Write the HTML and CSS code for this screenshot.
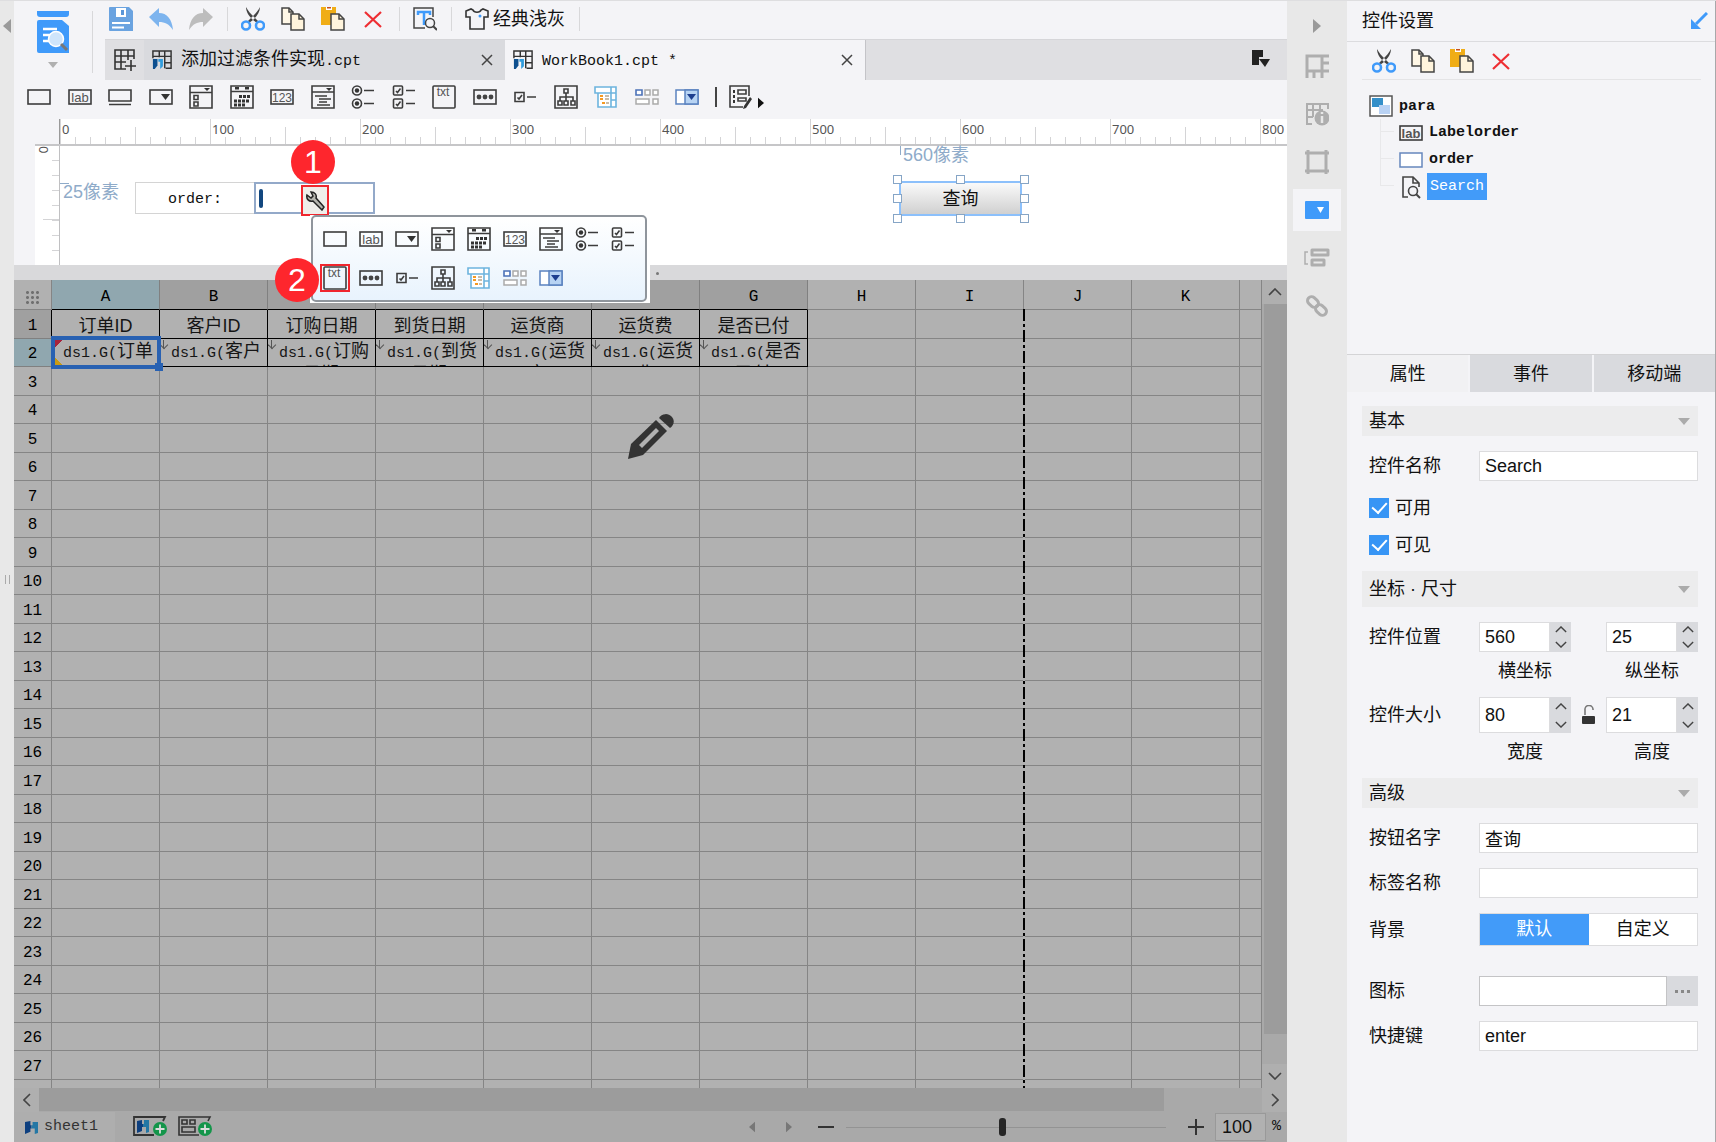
FILE: index.html
```
<!DOCTYPE html>
<html lang="zh-CN">
<head>
  <meta charset="UTF-8" />
  <meta name="viewport" content="width=device-width, initial-scale=1.0" />
  <title>WorkBook1.cpt</title>
  <link rel="stylesheet" href="styles.css">
</head>
<body>
  <svg class="sprite" aria-hidden="true">
    <symbol id="text" viewBox="0 0 24 24"><rect class="ln" x="1" y="5" width="22" height="14" /></symbol>
    <symbol id="lab" viewBox="0 0 24 24"><rect class="ln" x="1" y="5" width="22" height="14" /><text class="tx" x="12" y="16.5" font-size="13">lab</text></symbol>
    <symbol id="button" viewBox="0 0 24 24"><path class="ln" d="M1 5h22v11H1zM1 19.5h22" /></symbol>
    <symbol id="combo" viewBox="0 0 24 24"><rect class="ln" x="1" y="5" width="22" height="14" /><path d="M12 9h9l-4.500 6z" fill="#333" /></symbol>
    <symbol id="combocheck" viewBox="0 0 24 24"><path class="ln" d="M1 1h22v22H1zM1 7.500h22M5 10.500h4v4H5zM5 17h4v4H5z" /><path d="M15 3h6l-3 3z" fill="#333" /></symbol>
    <symbol id="date" viewBox="0 0 24 24"><path class="ln" d="M1 1h22v22H1zM1 6.500h22" /><path d="M5 2v2.500h4V2zM15 2v2.500h4V2z" fill="#333" /><path d="M9 11.500h11M4 16h16M4 20h12" stroke="#333" stroke-width="3" stroke-dasharray="3 1" fill="none" /></symbol>
    <symbol id="num" viewBox="0 0 24 24"><rect class="ln" x="1" y="5" width="22" height="14" /><text class="tx" x="12" y="16.500" font-size="12">123</text></symbol>
    <symbol id="tree" viewBox="0 0 24 24"><path class="ln" d="M1 1h22v22H1zM1 7h22M4 11h12M8 14h12M8 17h8M6 20h13" /><path d="M15 3h6l-3 3z" fill="#333" /></symbol>
    <symbol id="radio" viewBox="0 0 24 24"><g class="ln"><circle cx="6" cy="5.500" r="4.500" /><circle cx="6" cy="18.500" r="4.500" /><path d="M13 5.500h10M13 18.500h10" /></g><circle cx="6" cy="5.500" r="2.200" fill="#333" /><circle cx="6" cy="18.500" r="2.200" fill="#333" /></symbol>
    <symbol id="check" viewBox="0 0 24 24"><g class="ln"><rect x="1.500" y="1" width="9" height="9" rx="1" /><rect x="1.500" y="14" width="9" height="9" rx="1" /><path d="M4 6l1.500 1.500L8.500 3.500M4 19l1.500 1.500L8.500 16.500M14 5.500h9M14 18.500h9" /></g></symbol>
    <symbol id="area" viewBox="0 0 24 24"><rect class="ln" x="1" y="1" width="22" height="22" rx="1" /><text class="tx" x="11" y="11" font-size="12">txt</text></symbol>
    <symbol id="pass" viewBox="0 0 24 24"><rect class="ln" x="1" y="5" width="22" height="14" /><g fill="#444"><circle cx="6" cy="12" r="2.400" /><circle cx="12" cy="12" r="2.400" /><circle cx="18" cy="12" r="2.400" /></g></symbol>
    <symbol id="onecheck" viewBox="0 0 24 24"><path class="ln" d="M2 7.500h9v9H2zM4.500 12.500L6 14l3-4M14 12h9" /></symbol>
    <symbol id="org" viewBox="0 0 24 24"><path class="ln" d="M1 1h22v22H1zM10 4h4v4h-4zM4 16h4v4H4zM10 16h4v4h-4zM17 16h4v4h-4zM12 8v8M6 16v-4h13v4" /></symbol>
    <symbol id="viewtree" viewBox="0 0 24 24"><path d="M1 2h21v6H1zM4 8h13v14H4zM17 2h5v20h-5zM17 15h5" fill="#fff" stroke="#6db4de" stroke-width="1.600" /><path d="M6 11h3M6 14h3M8 18h3" stroke="#f59a23" stroke-width="2" /><path d="M11 11h4M11 14h4M12 18h3" stroke="#b8a78c" stroke-width="1.500" /></symbol>
    <symbol id="group" viewBox="0 0 24 24"><path d="M1 5h6v5H1z" fill="#fff" stroke="#4c72b8" stroke-width="1.600" /><path d="M10 5h5v5h-5zM18 5h5v5h-5zM1 14h13v5H1zM18 14h5v5h-5z" fill="#fff" stroke="#aaa" stroke-width="1.500" /></symbol>
    <symbol id="bluecombo" viewBox="0 0 24 24"><path d="M1 5h22v14H1z" fill="#fff" stroke="#5b83c0" stroke-width="1.500" /><path d="M10 5h13v14H10z" fill="#b7d3f3" stroke="#5b83c0" stroke-width="1.500" /><path d="M12 9h9l-4.500 6z" fill="#1e3f8f" /></symbol>
    <symbol id="predef" viewBox="0 0 24 24"><path class="ln" d="M20 11V1H1v21h13M9 5h8v4H9zM9 13h8v3H9z" /><path d="M4 5h2v3H4zM4 10h2v3H4zM4 15h2v3H4zM21 12l2 2-6 9-3 1 1-3z" fill="#333" /></symbol>

    <symbol id="save" viewBox="0 0 24 24"><path d="M1 0h19l4 4v20H1a1 1 0 0 1-1-1V1a1 1 0 0 1 1-1z" fill="#6aa3e0" /><path d="M7 1h10v9H7z" fill="#fff" /><path d="M12 3h3v5h-3z" fill="#5a96d8" /><path d="M3 16h18M3 20.500h12" stroke="#fff" stroke-width="1.800" /></symbol>
    <symbol id="undo" viewBox="0 0 24 24"><path d="M0 10L10 1v5c8 0 13 6 14 17-4-6-8-8-14-8v5z" fill="#7db4ee" /></symbol>
    <symbol id="redo" viewBox="0 0 24 24"><path d="M24 10L14 1v5C6 6 1 12 0 23c4-6 8-8 14-8v5z" fill="#bdbdbd" /></symbol>
    <symbol id="cut" viewBox="0 0 24 24"><path d="M5 0c0 5 3 9 7 13l4 3 1-2-4-4C10 7 7 4 5 0zM19 0c0 5-3 9-7 13l-4 3-1-2 4-4c3-3 6-6 8-10z" fill="#444" /><g fill="none" stroke="#3f9afa" stroke-width="2.600"><circle cx="5" cy="18.500" r="4" /><circle cx="19" cy="18.500" r="4" /></g></symbol>
    <symbol id="copy" viewBox="0 0 24 24"><path d="M1 1h7l4 4v12H1z" fill="#fff7e6" stroke="#444" stroke-width="1.500" /><path d="M8 1v4h4" fill="none" stroke="#444" stroke-width="1.500" /><path d="M10 7h8l5 5v11H10z" fill="#fff4dc" stroke="#444" stroke-width="1.500" /><path d="M18 7v5h5" fill="none" stroke="#444" stroke-width="1.500" /></symbol>
    <symbol id="paste" viewBox="0 0 24 24"><path d="M0 0h15v18H0z" fill="#f0ad16" /><path d="M5 0h6v3H5z" fill="#fff" /><path d="M6 0h4v1.500H6z" fill="#c8501e" /><path d="M10 7h8l5 5v11H10z" fill="#fff4dc" stroke="#444" stroke-width="1.500" /><path d="M18 7v5h5" fill="none" stroke="#444" stroke-width="1.500" /></symbol>
    <symbol id="del" viewBox="0 0 24 24"><path d="M4 5l16 15M20 5L4 20" stroke="#ee2e33" stroke-width="2.200" /></symbol>
    <symbol id="find" viewBox="0 0 24 24"><path d="M20 10V1H1v20h11" fill="none" stroke="#444" stroke-width="1.500" /><path d="M5 8V5h12v3M11 5v13" stroke="#3f9afa" stroke-width="2.500" fill="none" /><circle cx="17" cy="16" r="4.500" fill="#f4f4f7" stroke="#444" stroke-width="1.500" /><path d="M20 19l4 4" stroke="#444" stroke-width="2" /></symbol>
    <symbol id="shirt" viewBox="0 0 24 24"><path d="M8 3L6 2 1 4v6h4v12h14V10h4V4l-5-2-2 1c-1 3-7 3-8 0z" fill="none" stroke="#333" stroke-width="1.600" /><circle cx="15" cy="9" r="1.500" fill="#3f9afa" /></symbol>
    <symbol id="x" viewBox="0 0 12 12"><path d="M1 1l10 10M11 1L1 11" stroke="#444" stroke-width="1.500" /></symbol>
    <symbol id="newtab" viewBox="0 0 22 22"><path d="M20 10V1H1v19h11M1 7h19M1 13h11M7 1v19M14 1v10M11 17h11M17 11v11" fill="none" stroke="#333" stroke-width="1.600" /></symbol>
    <symbol id="cpt" viewBox="0 0 22 22"><path d="M1 9V1h20v19h-6M1 7h20M8 1v7M14 1v19M14 14h7" fill="none" stroke="#333" stroke-width="1.600" /><path d="M1 10h5v7l-3 4H1z" fill="#0d4f8f" /><path d="M7 10h5v8l-3 3V13H7z" fill="#2f9cdd" /></symbol>
    <symbol id="fr" viewBox="0 0 12 12"><path d="M0 1l5-1v4h1v3H5v3l-5 2z" fill="#0d3f7f" /><path d="M6 4h1V1h5v10l-3 1V7H6z" fill="#2477a5" /></symbol>
    <symbol id="tabs" viewBox="0 0 20 20"><path d="M1 0h11v7H8v8H1zM8 9h11l-5 8z" fill="#222" /></symbol>
    <symbol id="preview" viewBox="0 0 32 42"><path d="M0 0h32v3a3 3 0 0 1-3 3H3a3 3 0 0 1-3-3z" fill="#3f9afa" /><path d="M2 9h23l7 6v27H2a2 2 0 0 1-2-2V11a2 2 0 0 1 2-2z" fill="#3f9afa" /><path d="M6 18h14M6 24h10M6 30h6" stroke="#fff" stroke-width="2.500" /><circle cx="19" cy="28" r="7.500" fill="#cfe5fb" stroke="#fff" stroke-width="1.500" /><path d="M24 33l6 6" stroke="#777" stroke-width="3" /></symbol>
    <symbol id="tri-r" viewBox="0 0 8 14"><path d="M0 0l8 7-8 7z" fill="currentColor" /></symbol>
    <symbol id="tri-l" viewBox="0 0 8 14"><path d="M8 0L0 7l8 7z" fill="currentColor" /></symbol>
    <symbol id="tri-d" viewBox="0 0 12 7"><path d="M0 0h12L6 7z" fill="currentColor" /></symbol>
    <symbol id="up" viewBox="0 0 14 8"><path d="M1 7l6-6 6 6" class="cv" /></symbol>
    <symbol id="down" viewBox="0 0 14 8"><path d="M1 1l6 6 6-6" class="cv" /></symbol>
    <symbol id="left" viewBox="0 0 8 14"><path d="M7 1L1 7l6 6" class="cv" /></symbol>
    <symbol id="right" viewBox="0 0 8 14"><path d="M1 1l6 6-6 6" class="cv" /></symbol>

    <symbol id="r-cell" viewBox="0 0 24 24"><path d="M24 2H2v22M2 17h22M17 2v15M17 9h7M9 17v7M17 17v7" class="rl" /></symbol>
    <symbol id="r-info" viewBox="0 0 24 24"><path d="M23 7V2H2v20h5M2 8h16M2 15h6M8 2v13M15 2v5" class="rl thin" /><circle cx="17" cy="16" r="7.500" fill="#aeaeae" /><path d="M17 14v7M17 10v2" stroke="#e8e8e8" stroke-width="2.500" /></symbol>
    <symbol id="r-frame" viewBox="0 0 24 24"><path d="M3 3h18v18H3zM0 3h3V0M21 0v3h3M24 21h-3v3M3 24v-3H0" class="rl" /></symbol>
    <symbol id="r-widget" viewBox="0 0 24 24"><rect y="3" width="24" height="18" rx="1" fill="#3f9afa" /><path d="M12 9h7l-3.500 6z" fill="#fff" /></symbol>
    <symbol id="r-bars" viewBox="0 0 26 24"><path d="M4 6H1v12h3" fill="none" stroke="#aeaeae" stroke-width="1.500" /><path d="M8 4h16v5H8zM8 14h12v5H8z" class="rl" stroke-linejoin="round" /></symbol>
    <symbol id="r-link" viewBox="0 0 24 24"><g class="rl"><rect x="-6" y="-4" width="12" height="8" rx="4" transform="translate(8 8) rotate(42)" /><rect x="-6" y="-4" width="12" height="8" rx="4" transform="translate(16 16) rotate(42)" /></g></symbol>
    <symbol id="para" viewBox="0 0 24 22"><path d="M1 1h22v20H1z" fill="#fff" stroke="#555" stroke-width="1.500" /><path d="M3 3h11v9H3z" fill="#3590c9" /><path d="M10 10h11v9H10z" fill="#b9d2f4" /></symbol>
    <symbol id="bluetext" viewBox="0 0 24 24"><rect x="1" y="5" width="22" height="14" fill="#fff" stroke="#6687bd" stroke-width="1.500" /></symbol>
    <symbol id="search" viewBox="0 0 24 24"><path d="M9 22H4V2h10l6 6v4M14 2v6h6" fill="none" stroke="#444" stroke-width="1.600" /><circle cx="14" cy="16" r="4.500" fill="none" stroke="#444" stroke-width="1.600" /><path d="M17 19l4 4" stroke="#444" stroke-width="2" /></symbol>
    <symbol id="dock" viewBox="0 0 18 18"><path d="M17 1L6 12" stroke="#3f9afa" stroke-width="3" /><path d="M1 7v10h10z" fill="#3f9afa" /></symbol>
    <symbol id="lock" viewBox="0 0 14 20"><path d="M3 10V5a4 4 0 0 1 8-1v1" fill="none" stroke="#777" stroke-width="1.600" /><rect x="0" y="11" width="13" height="8" rx="1" fill="#333" /></symbol>
    <symbol id="wrench" viewBox="0 0 20 20"><path d="M2 4l4 3 2-2-2-4c4 0 6 3 5 6l8 9-2 3-9-9C4 11 1 8 2 4z" fill="#b5b5ae" stroke="#222" stroke-width="1.500" /></symbol>
    <symbol id="pencil" viewBox="0 0 46 46"><path d="M0 46L3 31 28 7l11 11L15 42z" fill="#333" /><path d="M11 32L28 15l3 3-17 17z" fill="#b1b1b1" /><path d="M31 5a8 8 0 0 1 13-1c3 4 2 8-2 11z" fill="#333" /></symbol>
    <symbol id="addsheet" viewBox="0 0 34 24"><path d="M21 20H1V2h31l-2 4" fill="none" stroke="#333" stroke-width="1.800" /><path d="M4 6l5-1v4h1v3H9v4l-5 2z" fill="#0d3f7f" /><path d="M10 9h1V5h5v12l-3 1v-6h-3z" fill="#2477a5" /><circle cx="27" cy="14" r="7" fill="#14954a" /><path d="M22.500 14h9M27 9.500v9" stroke="#ddd" stroke-width="1.800" /></symbol>
    <symbol id="addform" viewBox="0 0 34 24"><path d="M21 20H1V2h31l-2 4M4 5h5v4H4zM12 5h5v4h-5zM4 12h13v5H4z" fill="none" stroke="#333" stroke-width="1.600" /><circle cx="27" cy="14" r="7" fill="#14954a" /><path d="M22.500 14h9M27 9.500v9" stroke="#ddd" stroke-width="1.800" /></symbol>
  </svg>

  <div class="app">
    <aside class="edge">
      <button class="plain edge-arrow" aria-label="展开"><svg width="8" height="14"><use href="#tri-l" /></svg></button>
      <span class="edge-grip"></span>
    </aside>

    <main class="main">
      <header class="top">
        <div class="preview">
          <button class="plain" aria-label="预览"><svg width="32" height="42"><use href="#preview" /></svg></button>
          <svg class="muted" width="10" height="6"><use href="#tri-d" /></svg>
        </div>
        <div class="top-rows">
          <div class="toolbar">
            <button class="plain" aria-label="保存"><svg width="24" height="24"><use href="#save" /></svg></button>
            <button class="plain" aria-label="撤销"><svg width="24" height="24"><use href="#undo" /></svg></button>
            <button class="plain" aria-label="重做"><svg width="24" height="24"><use href="#redo" /></svg></button>
            <i class="sep"></i>
            <button class="plain" aria-label="剪切"><svg width="24" height="24"><use href="#cut" /></svg></button>
            <button class="plain" aria-label="复制"><svg width="24" height="24"><use href="#copy" /></svg></button>
            <button class="plain" aria-label="粘贴"><svg width="24" height="24"><use href="#paste" /></svg></button>
            <button class="plain" aria-label="删除"><svg width="24" height="24"><use href="#del" /></svg></button>
            <i class="sep"></i>
            <button class="plain" aria-label="查找"><svg width="24" height="24"><use href="#find" /></svg></button>
            <i class="sep"></i>
            <button class="plain theme"><svg width="24" height="24"><use href="#shirt" /></svg>经典浅灰</button>
            <i class="sep"></i>
          </div>
          <div class="tabs">
            <button class="plain newtab" aria-label="新建"><svg width="22" height="22"><use href="#newtab" /></svg></button>
            <div class="tab">
              <svg width="20" height="22"><use href="#cpt" /></svg>
              <span class="tab-name">添加过滤条件实现<span class="mono">.cpt</span></span>
              <button class="plain" aria-label="关闭"><svg width="12" height="12"><use href="#x" /></svg></button>
            </div>
            <div class="tab active">
              <svg width="20" height="22"><use href="#cpt" /></svg>
              <span class="tab-name"><span class="mono">WorkBook1.cpt *</span></span>
              <button class="plain" aria-label="关闭"><svg width="12" height="12"><use href="#x" /></svg></button>
            </div>
            <button class="plain tab-menu" aria-label="标签列表"><svg width="20" height="20"><use href="#tabs" /></svg></button>
          </div>
        </div>
      </header>

      <div class="widgets">
        <div class="widget-list" id="widgetBar"></div>
        <i class="bar"></i>
        <button class="plain" aria-label="预定义控件"><svg width="24" height="24"><use href="#predef" /></svg></button>
        <svg class="more" width="6" height="12"><use href="#tri-r" /></svg>
      </div>

      <div class="ruler">
        <div class="ruler-scale" id="ruler"></div>
      </div>

      <section class="designer">
        <div class="vruler"><span>0</span></div>
        <div class="canvas">
          <span class="hint hint-y">25像素</span>
          <span class="hint hint-x">560像素</span>
          <label class="w-label" for="orderBox">order:</label>
          <input class="w-input" id="orderBox" type="text">
          <span class="w-caret"></span>
          <button class="plain wrench" aria-label="更改控件"><svg width="20" height="20"><use href="#wrench" /></svg></button>
          <span class="step step-1">1</span>

          <div class="w-button-box">
            <button class="w-button">查询</button>
            <i class="h nw"></i><i class="h n"></i><i class="h ne"></i><i class="h w"></i>
            <i class="h e"></i><i class="h sw"></i><i class="h s"></i><i class="h se"></i>
          </div>

          <div class="popup-back">
            <div class="popup" id="popup"></div>
          </div>
          <span class="step step-2">2</span>
        </div>
      </section>
      <div class="splitter"><i></i></div>

      <section class="sheet">
        <div class="grid">
          <table>
            <colgroup><col class="c-head"><col span="11" class="c-cell"><col></colgroup>
            <thead><tr id="cols"></tr></thead>
            <tbody id="rows"></tbody>
          </table>
          <div class="pagebreak"></div>
          <svg class="pencil" width="46" height="46"><use href="#pencil" /></svg>
        </div>
        <div class="vscroll">
          <button class="plain" aria-label="向上"><svg width="14" height="8"><use href="#up" /></svg></button>
          <div class="vtrack"><div class="vthumb"></div></div>
          <button class="plain" aria-label="向下"><svg width="14" height="8"><use href="#down" /></svg></button>
        </div>
      </section>
      <div class="hscroll">
        <button class="plain" aria-label="向左"><svg width="8" height="14"><use href="#left" /></svg></button>
        <div class="htrack"><div class="hthumb"></div></div>
        <button class="plain" aria-label="向右"><svg width="8" height="14"><use href="#right" /></svg></button>
      </div>

      <footer class="status">
        <button class="plain sheet-tab"><svg width="13" height="13"><use href="#fr" /></svg><span class="mono">sheet1</span></button>
        <button class="plain" aria-label="添加报表"><svg width="34" height="24"><use href="#addsheet" /></svg></button>
        <button class="plain" aria-label="添加表单"><svg width="34" height="24"><use href="#addform" /></svg></button>
        <div class="zoom">
          <button class="plain step-arrow" aria-label="上一页"><svg width="6" height="12"><use href="#tri-l" /></svg></button>
          <button class="plain step-arrow" aria-label="下一页"><svg width="6" height="12"><use href="#tri-r" /></svg></button>
          <button class="plain minus" aria-label="缩小"></button>
          <input class="slider" type="range" min="0" max="100" value="49" aria-label="缩放">
          <button class="plain minus plus" aria-label="放大"></button>
          <input class="zoom-value" id="zoomValue" type="text" value="100"><label class="mono" for="zoomValue">%</label>
        </div>
      </footer>
    </main>

    <nav class="rail">
      <button class="plain rail-arrow" aria-label="收起"><svg width="8" height="14"><use href="#tri-r" /></svg></button>
      <button class="plain" aria-label="单元格元素"><svg width="24" height="24"><use href="#r-cell" /></svg></button>
      <button class="plain" aria-label="单元格属性"><svg width="24" height="24"><use href="#r-info" /></svg></button>
      <button class="plain" aria-label="悬浮元素"><svg width="24" height="24"><use href="#r-frame" /></svg></button>
      <button class="plain current" aria-label="控件设置"><svg width="24" height="24"><use href="#r-widget" /></svg></button>
      <button class="plain" aria-label="条件属性"><svg width="26" height="24"><use href="#r-bars" /></svg></button>
      <button class="plain" aria-label="超级链接"><svg width="24" height="24"><use href="#r-link" /></svg></button>
    </nav>

    <aside class="panel">
      <div class="panel-title"><span>控件设置</span><button class="plain" aria-label="停靠"><svg width="18" height="18"><use href="#dock" /></svg></button></div>
      <div class="panel-tools">
        <button class="plain" aria-label="剪切"><svg width="24" height="24"><use href="#cut" /></svg></button>
        <button class="plain" aria-label="复制"><svg width="24" height="24"><use href="#copy" /></svg></button>
        <button class="plain" aria-label="粘贴"><svg width="24" height="24"><use href="#paste" /></svg></button>
        <button class="plain" aria-label="删除"><svg width="24" height="24"><use href="#del" /></svg></button>
      </div>
      <div class="tree">
        <div class="node root"><svg width="24" height="22"><use href="#para" /></svg><span>para</span></div>
        <ul>
          <li class="node"><svg width="24" height="24"><use href="#lab" /></svg><span>Labelorder</span></li>
          <li class="node"><svg width="24" height="24"><use href="#bluetext" /></svg><span>order</span></li>
          <li class="node"><svg width="24" height="24"><use href="#search" /></svg><span class="picked">Search</span></li>
        </ul>
      </div>

      <div class="panel-tabs">
        <button class="active">属性</button>
        <button>事件</button>
        <button>移动端</button>
      </div>

      <form class="props">
        <h2>基本<svg width="12" height="7"><use href="#tri-d" /></svg></h2>
        <div class="row"><label for="name">控件名称</label><input id="name" type="text" value="Search"></div>
        <div class="checks">
          <label><input type="checkbox" checked>可用</label>
          <label><input type="checkbox" checked>可见</label>
        </div>

        <h2 class="tall">坐标 · 尺寸<svg width="12" height="7"><use href="#tri-d" /></svg></h2>
        <div class="row pair">
          <label for="px">控件位置</label>
          <div class="spin"><input id="px" type="number" value="560"><span><button type="button" aria-label="增加"><svg width="12" height="7"><use href="#up" /></svg></button><button type="button" aria-label="减少"><svg width="12" height="7"><use href="#down" /></svg></button></span></div>
          <i></i>
          <div class="spin"><input type="number" value="25" aria-label="纵坐标"><span><button type="button" aria-label="增加"><svg width="12" height="7"><use href="#up" /></svg></button><button type="button" aria-label="减少"><svg width="12" height="7"><use href="#down" /></svg></button></span></div>
        </div>
        <div class="captions"><span>横坐标</span><span>纵坐标</span></div>
        <div class="row pair size">
          <label for="pw">控件大小</label>
          <div class="spin"><input id="pw" type="number" value="80"><span><button type="button" aria-label="增加"><svg width="12" height="7"><use href="#up" /></svg></button><button type="button" aria-label="减少"><svg width="12" height="7"><use href="#down" /></svg></button></span></div>
          <svg width="14" height="20"><use href="#lock" /></svg>
          <div class="spin"><input type="number" value="21" aria-label="高度"><span><button type="button" aria-label="增加"><svg width="12" height="7"><use href="#up" /></svg></button><button type="button" aria-label="减少"><svg width="12" height="7"><use href="#down" /></svg></button></span></div>
        </div>
        <div class="captions"><span>宽度</span><span>高度</span></div>

        <h2>高级<svg width="12" height="7"><use href="#tri-d" /></svg></h2>
        <div class="row"><label for="btn">按钮名字</label><input id="btn" type="text" value="查询"></div>
        <div class="row"><label for="tag">标签名称</label><input id="tag" type="text"></div>
        <div class="row">
          <span class="row-name">背景</span>
          <div class="segment">
            <label><input type="radio" name="bg" checked><span>默认</span></label>
            <label><input type="radio" name="bg"><span>自定义</span></label>
          </div>
        </div>
        <div class="row icon-row"><label for="icon">图标</label><div class="picker"><input id="icon" type="text"><button type="button" aria-label="选择图标"><i></i><i></i><i></i></button></div></div>
        <div class="row"><label for="key">快捷键</label><input id="key" type="text" value="enter"></div>
      </form>
    </aside>
  </div>

  <script>
    const widgets = ["text", "lab", "button", "combo", "combocheck", "date", "num", "tree", "radio", "check",
      "area", "pass", "onecheck", "org", "viewtree", "group", "bluecombo"];

    function iconButton(id) {
      return `<button class="plain ico-${id}" aria-label="${id}"><svg width="24" height="24"><use href="#${id}" /></svg></button>`;
    }

    document.getElementById("widgetBar").innerHTML = widgets.map(iconButton).join("");
    document.getElementById("popup").innerHTML = widgets.filter(id => id !== "button").map(iconButton).join("");

    let marks = "";
    for (let n = 0; n <= 800; n += 100) {
      marks += `<span>${n}</span>`;
    }
    document.getElementById("ruler").innerHTML = marks;

    const letters = ["A", "B", "C", "D", "E", "F", "G", "H", "I", "J", "K"];
    const fields = ["订单ID", "客户ID", "订购日期", "到货日期", "运货商", "运货费", "是否已付"];

    document.getElementById("cols").innerHTML =
      `<th class="corner"><i></i></th>` +
      letters.map((l, i) => `<th class="${i === 0 ? "hot" : i < 7 ? "used" : ""}">${l}</th>`).join("") + "<th></th>";

    function cell(row, col) {
      const field = fields[col];
      if (row > 2 || !field) return "<td></td>";
      if (row === 1) return `<td class="data">${field}</td>`;
      const mark = col === 0 ? '<div class="selection"></div>' : '<i class="expand"></i>';
      return `<td class="data">${mark}<div class="formula"><span class="mono">ds1.G(</span>${field.slice(0, 2)}<br>${field.slice(2)})</div></td>`;
    }

    let html = "";
    for (let r = 1; r <= 28; r++) {
      html += `<tr><th class="${r === 1 ? "used" : r === 2 ? "hot" : ""}">${r < 28 ? r : ""}</th>`;
      for (let c = 0; c < 12; c++) html += cell(r, c);
      html += "</tr>";
    }
    document.getElementById("rows").innerHTML = html;
  </script>
</body>
</html>
```
FILE: styles.css
```
* {
  box-sizing: border-box;
}
body {
  margin: 0;
  background: #f4f4f7;
  color: #111;
  font-family: "Liberation Sans", "Noto Sans CJK SC", sans-serif;
  font-size: 18px;
  line-height: 24px;
}
button, input {
  font: inherit;
  color: inherit;
}
svg {
  display: block;
  flex: none;
}
.sprite {
  display: none;
}
.ln {
  fill: none;
  stroke: #3c3c3c;
  stroke-width: 1.6;
}
.tx {
  fill: #555;
  font-family: "Liberation Sans", sans-serif;
  text-anchor: middle;
}
.cv {
  fill: none;
  stroke: #444;
  stroke-width: 1.6;
}
.rl {
  fill: none;
  stroke: #aeaeae;
  stroke-width: 3;
}
.rl.thin {
  stroke-width: 2;
}
.plain {
  display: flex;
  align-items: center;
  justify-content: center;
  padding: 0;
  border: 0;
  background: none;
}
.mono {
  font-family: "Liberation Mono", monospace;
  font-size: 15px;
}
.muted {
  color: #b0b0b0;
}

.app {
  display: flex;
  height: 100vh;
  overflow: hidden;
  border-top: 1px solid #dedee0;
}
.edge {
  width: 14px;
  flex: none;
  display: flex;
  flex-direction: column;
  align-items: center;
  padding-bottom: 16px;
  background: #e8e8e8;
  color: #9a9a9a;
}
.edge-arrow {
  margin-top: 18px;
}
.edge-grip {
  width: 5px;
  height: 9px;
  margin-top: auto;
  margin-bottom: auto;
  border: solid #aaa;
  border-width: 0 1px;
}
.main {
  flex: 1;
  min-width: 0;
  display: flex;
  flex-direction: column;
}

/* toolbar and file tabs */
.top {
  display: flex;
  height: 79px;
}
.preview {
  width: 79px;
  margin: 10px 12px 7px 0;
  border-right: 1px solid #d8d8da;
  display: flex;
  flex-direction: column;
  align-items: center;
  gap: 9px;
}
.top-rows {
  flex: 1;
  min-width: 0;
}
.toolbar {
  display: flex;
  align-items: center;
  gap: 16px;
  height: 38px;
  padding: 0 4px 2px;
}
.toolbar .sep {
  width: 1px;
  height: 24px;
  margin: 0 -3px 0 -2px;
  background: #d8d8da;
}
.theme {
  gap: 4px;
}
.tabs {
  display: flex;
  height: 41px;
  background: #dfdfe2;
  border-top: 1px solid #d6d6d9;
}
.newtab {
  width: 39px;
}
.tab {
  width: 361px;
  display: flex;
  align-items: center;
  gap: 9px;
  padding: 0 12px 0 8px;
  background: #d9dade;
}
.tab.active {
  background: #f4f4f7;
  border-right: 1px solid #c4c4c8;
}
.tab-name {
  flex: 1;
}
.tab-menu {
  margin-left: auto;
  margin-right: 16px;
}

/* widget bar */
.widgets {
  display: flex;
  align-items: center;
  height: 39px;
  padding: 0 0 5px 13px;
}
.widget-list {
  width: 672px;
  display: flex;
  justify-content: space-between;
}
.widgets .bar {
  width: 2px;
  height: 20px;
  margin: 0 12px 0 16px;
  background: #444;
}
.more {
  margin: 12px 0 0 5px;
}

/* rulers and the parameter canvas */
.ruler {
  flex: none;
  height: 27px;
  margin-left: 21px;
  padding-left: 24px;
  border-bottom: 2px solid #c6c6c8;
}
.ruler-scale {
  display: flex;
  height: 25px;
  overflow: hidden;
  background:
    repeating-linear-gradient(90deg, #d4d4d6 0 1px, transparent 1px 150px),
    repeating-linear-gradient(90deg, #d4d4d6 0 1px, transparent 1px 75px) 0 100% / 100% 17px no-repeat,
    repeating-linear-gradient(90deg, #d4d4d6 0 1px, transparent 1px 15px) 0 100% / 100% 7px no-repeat,
    #fff;
  border-left: 1px solid #999;
}
.ruler-scale span {
  flex: none;
  width: 150px;
  padding-left: 2px;
  color: #555;
  font: 13px/20px "Noto Sans", sans-serif;
}
.designer {
  flex: none;
  display: flex;
  height: 119px;
  padding-left: 21px;
}
.vruler {
  width: 25px;
  flex: none;
  border-right: 1px solid #c0c0c2;
  background:
    repeating-linear-gradient(0deg, #d4d4d6 0 1px, transparent 1px 15px) 100% 0 / 7px 105px no-repeat,
    linear-gradient(#d4d4d6, #d4d4d6) 100% 73px / 16px 1px no-repeat,
    #fff;
}
.vruler span {
  display: block;
  width: 16px;
  height: 10px;
  writing-mode: vertical-rl;
  color: #555;
  font: 13px/14px "Noto Sans", sans-serif;
}
.canvas {
  position: relative;
  flex: 1;
  z-index: 2;
  background: #fff;
}
.canvas > * {
  position: absolute;
}
.hint {
  color: #8fabc9;
}
.hint-y {
  left: 3px;
  top: 36px;
  line-height: 20px;
}
.hint-y::before {
  content: "";
  position: absolute;
  left: -3px;
  top: 1px;
  width: 9px;
  border-top: 1px solid #8fabc9;
}
.hint-x {
  left: 840px;
  top: -1px;
  padding-left: 3px;
  line-height: 20px;
}
.hint-x::before {
  content: "";
  position: absolute;
  left: 0;
  top: 1px;
  height: 9px;
  border-left: 1px solid #8fabc9;
}
.w-label {
  left: 75px;
  top: 36px;
  width: 120px;
  height: 32px;
  border: 1px solid #d4d4d4;
  font: 15px/34px "Liberation Mono", monospace;
  text-align: center;
}
.w-input {
  left: 194px;
  top: 36px;
  width: 121px;
  height: 32px;
  border: 2px solid #93a9c9;
  background: #fff;
}
.w-caret {
  left: 199px;
  top: 43px;
  width: 4px;
  height: 19px;
  border-radius: 2px;
  background: #12477f;
}
.wrench {
  left: 241px;
  top: 39px;
  width: 28px;
  height: 31px;
  border: 2px solid #f0262e;
  background: #efeeea;
}
.step {
  width: 44px;
  height: 44px;
  border-radius: 50%;
  background: #fe262d;
  color: #fff;
  font-size: 32px;
  line-height: 45px;
  text-align: center;
}
.step-1 {
  left: 231px;
  top: -6px;
}
.step-2 {
  left: 215px;
  top: 112px;
}
.w-button-box {
  left: 837px;
  top: 34px;
  width: 127px;
  height: 37px;
}
.w-button {
  width: 123px;
  height: 35px;
  margin: 1px 2px;
  padding: 0;
  border: 2px solid #8cc0fb;
  background: linear-gradient(#fafafa, #d0d0d0);
  display: block;
}
.h {
  position: absolute;
  width: 9px;
  height: 9px;
  border: 1px solid #86a5c6;
  background: #fff;
}
.nw, .n, .ne { top: -5px; }
.w, .e { top: 14px; }
.sw, .s, .se { top: 34px; }
.nw, .w, .sw { left: -4px; }
.n, .s { left: 59px; }
.ne, .e, .se { left: 123px; }

.popup-back {
  left: 250px;
  top: 69px;
  padding: 0 3px 1px 1px;
  background: #fff;
}
.popup {
  display: grid;
  grid-template-columns: repeat(9, 24px);
  gap: 15px 12px;
  padding: 10px;
  border: 2px solid #8f959c;
  border-radius: 5px;
  background: linear-gradient(#fff, #e8f3fd);
}
.popup .ico-area {
  position: relative;
}
.popup .ico-area::after {
  content: "";
  position: absolute;
  inset: -2px -3px;
  border: 2px solid #f0262e;
}
.splitter {
  flex: none;
  height: 15px;
  padding: 7px 0 0 50%;
  background: #d9d9db;
}
.splitter i {
  display: block;
  width: 3px;
  height: 3px;
  margin-left: 5px;
  border-radius: 50%;
  background: #777;
}

/* spreadsheet */
.sheet {
  flex: 1;
  min-height: 0;
  display: flex;
  background: #b1b1b1;
}
.grid {
  position: relative;
  flex: 1;
  min-width: 0;
  overflow: hidden;
}
.grid table {
  width: 100%;
  table-layout: fixed;
  border-collapse: separate;
  border-spacing: 0;
}
.c-head {
  width: 38px;
}
.c-cell {
  width: 108px;
}
.grid th, .grid td {
  position: relative;
  padding: 3px 0 0;
  height: 28px;
  border: solid #858585;
  border-width: 0 1px 1px 0;
  line-height: 24px;
  text-align: center;
  overflow: hidden;
}
.grid tr:nth-child(odd) > * {
  height: 29px;
}
.grid thead tr > th {
  height: 30px;
  padding-top: 5px;
}
.grid th {
  font: 16px/24px "Liberation Mono", monospace;
  color: #000;
}
.grid th.used {
  background: #a0a0a0;
}
.grid th.hot {
  background: #90a7af;
}
.grid td.data {
  border-color: #000;
  color: #151515;
}
.grid tr:nth-child(2) .data {
  padding-top: 0;
}
.grid th.used, .grid th.hot {
  border-color: #808080;
}
.grid tbody .used, .grid tbody .hot {
  border-right-color: #000;
}
.grid thead .used, .grid thead .hot {
  border-bottom-color: #000;
}
.corner i {
  display: block;
  width: 15px;
  height: 15px;
  margin: 0 auto;
  background: radial-gradient(circle, #707070 1px, transparent 2px) 0 0 / 5px 5px;
}
.grid .formula {
  height: 27px;
  padding: 2px 0 0 5px;
  line-height: 21px;
  overflow: hidden;
}
.grid td:has(.selection) {
  overflow: visible;
}
.selection {
  position: absolute;
  z-index: 1;
  inset: -3px -2px -3px -1px;
  border: 4px solid #2861b2;
  background:
    linear-gradient(45deg, #c99b13 50%, transparent 50%) 0 100% / 8px 8px no-repeat,
    linear-gradient(135deg, #a8233c 50%, transparent 50%) 0 0 / 8px 8px no-repeat;
}
.selection::after {
  content: "";
  position: absolute;
  right: -6px;
  bottom: -6px;
  width: 8px;
  height: 8px;
  background: #2861b2;
}
.expand {
  position: absolute;
  left: 3px;
  top: 1px;
  width: 1px;
  height: 8px;
  background: #555;
}
.expand::after {
  content: "";
  position: absolute;
  left: -2px;
  bottom: 0;
  width: 5px;
  height: 5px;
  border: solid #555;
  border-width: 0 1px 1px 0;
  transform: rotate(45deg);
}
.pagebreak {
  position: absolute;
  left: 1009px;
  top: 29px;
  bottom: 0;
  width: 2px;
  background: repeating-linear-gradient(#000 0 12px, #b1b1b1 12px 15px, #000 15px 18px, #b1b1b1 18px 21px);
}
.pencil {
  position: absolute;
  left: 614px;
  top: 133px;
}
.vscroll {
  width: 25px;
  flex: none;
  display: flex;
  flex-direction: column;
  background: #a9a9a9;
}
.vscroll button {
  height: 24px;
  background: #afafaf;
}
.vtrack {
  flex: 1;
}
.vthumb {
  height: 96%;
  margin-left: 2px;
  background: #9c9c9c;
}
.hscroll {
  flex: none;
  display: flex;
  height: 24px;
  background: #a9a9a9;
}
.hscroll button {
  width: 25px;
  background: #afafaf;
}
.htrack {
  flex: 1;
}
.hthumb {
  width: 92%;
  height: 23px;
  background: #9c9c9c;
}

.status {
  flex: none;
  display: flex;
  align-items: center;
  height: 30px;
  background: #a9a9a9;
  gap: 11px;
}
.sheet-tab {
  align-self: stretch;
  width: 101px;
  margin-right: 7px;
  padding-right: 6px;
  gap: 6px;
  background: #aeaeae;
  color: #333;
}
.zoom {
  display: flex;
  align-items: center;
  margin-left: auto;
  padding-right: 6px;
}
.step-arrow {
  margin-right: 31px;
  color: #777;
}
.step-arrow + .step-arrow {
  margin-right: 26px;
}
.minus {
  position: relative;
  width: 16px;
  height: 16px;
  background: linear-gradient(#333, #333) center / 16px 2px no-repeat;
}
.minus.plus {
  margin-right: 11px;
  background:
    linear-gradient(#333, #333) center / 16px 2px no-repeat,
    linear-gradient(#333, #333) center / 2px 16px no-repeat;
}
.slider {
  appearance: none;
  width: 320px;
  height: 20px;
  margin: 0 22px 0 12px;
  background: linear-gradient(#939393, #939393) center / 100% 1px no-repeat;
}
.slider::-webkit-slider-thumb {
  appearance: none;
  width: 7px;
  height: 18px;
  border-radius: 3px;
  background: #262626;
}
.zoom-value {
  width: 51px;
  height: 28px;
  margin-right: 6px;
  padding: 0 6px;
  border: 1px solid #999;
  background: #b1b1b1;
}

/* icon rail */
.rail {
  width: 60px;
  flex: none;
  display: flex;
  flex-direction: column;
  align-items: center;
  gap: 6px;
  background: #e8e8e8;
}
.rail button {
  width: 48px;
  height: 42px;
}
.rail .rail-arrow {
  height: 14px;
  margin: 18px 0 6px;
  color: #999;
}
.rail .current {
  background: #f4f4f7;
}

/* settings panel */
.panel {
  width: 369px;
  flex: none;
  border-right: 1px solid #a8a8aa;
}
.panel-title {
  display: flex;
  justify-content: space-between;
  align-items: center;
  height: 41px;
  padding: 0 7px 0 15px;
  border-bottom: 1px solid #dcdcdf;
}
.panel-tools {
  display: flex;
  gap: 15px;
  height: 38px;
  margin: 0 14px 0 15px;
  padding: 7px 10px;
  border-bottom: 1px solid #e4e4e6;
}
.tree {
  height: 274px;
  padding: 13px 0 0 22px;
}
.tree ul {
  margin: 0 0 0 11px;
  padding: 0 0 0 19px;
  list-style: none;
  background:
    linear-gradient(#e8e8ea, #e8e8ea) 0 0 / 1px 66px no-repeat,
    repeating-linear-gradient(transparent 0 12px, #e8e8ea 12px 13px, transparent 13px 27px) 0 0 / 14px 100% no-repeat;
}
.node {
  display: flex;
  align-items: center;
  height: 27px;
  font: bold 15px/27px "Liberation Mono", monospace;
}
.node span {
  padding: 0 4px 0 6px;
}
.node.root {
  height: 26px;
}
.node .picked {
  margin-left: 4px;
  padding: 0 3px;
  background: #429bf9;
  color: #fff;
  font-weight: normal;
}
.panel-tabs {
  display: grid;
  grid-template-columns: repeat(3, 1fr);
  gap: 2px;
  border-top: 1px solid #d4d4d6;
}
.panel-tabs button {
  height: 37px;
  padding: 0;
  border: 0;
  background: #d9dade;
}
.panel-tabs .active {
  background: #f1f1f3;
}
.props {
  padding: 14px 17px 0 15px;
}
.props h2 {
  display: flex;
  align-items: center;
  justify-content: space-between;
  height: 30px;
  margin: 0 0 15px;
  padding: 0 8px 0 7px;
  background: #ececed;
  color: #111;
  font-size: 18px;
  font-weight: normal;
}
.props h2 svg {
  color: #ababab;
}
.props .tall {
  height: 36px;
}
.row {
  display: grid;
  grid-template-columns: 117px 1fr;
  align-items: center;
  margin-bottom: 15px;
}
.row > label, .row-name {
  padding-left: 7px;
}
.row input[type="text"], .row input[type="number"] {
  width: 100%;
  height: 30px;
  padding: 0 5px;
  border: 1px solid #dcdcde;
  border-radius: 0;
  background: #fff;
}
.checks {
  margin: -7px 0 8px 7px;
}
.checks label {
  display: flex;
  align-items: center;
  gap: 6px;
  height: 37px;
}
.checks input {
  appearance: none;
  width: 20px;
  height: 20px;
  margin: 0;
  background: #3795f5;
  display: grid;
  place-items: center;
}
.checks input:checked::before {
  content: "";
  width: 7px;
  height: 12px;
  margin-top: -3px;
  border: solid #fff;
  border-width: 0 2px 2px 0;
  transform: rotate(42deg);
}
.row.pair {
  grid-template-columns: 117px 92px 1fr 92px;
  justify-items: center;
  margin-bottom: 0;
}
.row.pair > label {
  justify-self: start;
}
.spin {
  display: flex;
  width: 100%;
  height: 30px;
}
.size .spin {
  height: 36px;
}
.row .spin input[type="number"] {
  flex: 1;
  min-width: 0;
  height: 100%;
  appearance: textfield;
}
.spin input::-webkit-inner-spin-button {
  appearance: none;
}
.spin span {
  width: 21px;
  display: flex;
  flex-direction: column;
  background: #d9dade;
}
.spin button {
  flex: 1;
  display: flex;
  align-items: center;
  justify-content: center;
  padding: 0;
  border: 0;
  background: none;
}
.captions {
  display: flex;
  justify-content: space-between;
  height: 38px;
  margin: 0 0 7px 117px;
  line-height: 38px;
}
.captions span {
  width: 92px;
  text-align: center;
}
.segment {
  display: flex;
  height: 33px;
  border: 1px solid #dcdcde;
  background: #fff;
}
.segment label {
  position: relative;
  flex: 1;
}
.segment input {
  position: absolute;
  opacity: 0;
}
.segment span {
  display: block;
  height: 31px;
  line-height: 31px;
  text-align: center;
}
.segment input:checked + span {
  background: #429bf9;
  color: #fff;
}
.icon-row {
  margin-top: 30px;
}
.picker {
  display: flex;
}
.row .picker input[type="text"] {
  flex: 1;
  border-color: #c4c4c6;
}
.picker button {
  width: 31px;
  display: flex;
  align-items: center;
  justify-content: center;
  gap: 3px;
  padding: 0;
  border: 0;
  background: #d9dade;
}
.picker i {
  width: 3px;
  height: 3px;
  background: #888;
}
```
